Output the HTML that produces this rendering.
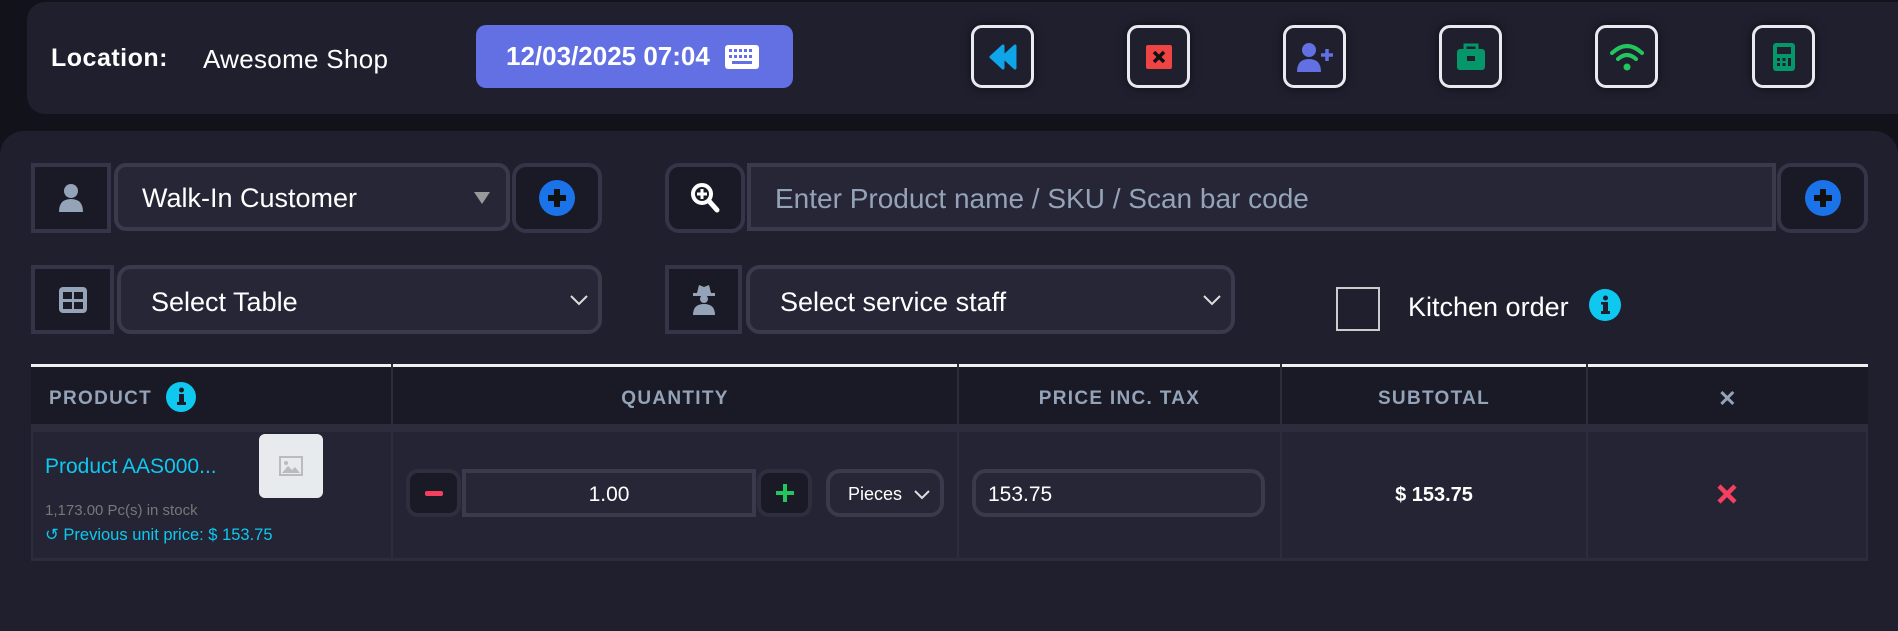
<!DOCTYPE html>
<html><head><meta charset="utf-8"><style>
*{box-sizing:border-box;margin:0;padding:0}
body{width:1898px;height:624px;background:#12121a;font-family:"Liberation Sans",sans-serif;position:relative;overflow:hidden;color:#fff}
.a{position:absolute}
.top{left:27px;top:2px;width:1900px;height:112px;background:#1f1f2e;border-radius:18px}
.main{left:0;top:131px;width:1898px;height:500px;background:#1f1f2e;border-radius:24px 24px 0 0}
.ib{position:absolute;top:25px;width:63px;height:63px;border:3px solid #e8eaf0;border-radius:11px;display:flex;align-items:center;justify-content:center;box-shadow:0 0 10px rgba(0,0,0,.5)}
.box{position:absolute;background:#1a1a26;border:4px solid #35354a;display:flex;align-items:center;justify-content:center}
.inp{position:absolute;background:#262636;border:4px solid #3a3a4c;display:flex;align-items:center;font-size:27px}
.th{position:absolute;top:370px;height:58px;display:flex;align-items:center;justify-content:center;color:#94a3b8;font-weight:bold;font-size:19px;letter-spacing:1.3px}
.vl{position:absolute;top:364px;width:2px;height:196px;background:#2c2c3c}
</style></head><body>
<div class="a top"></div>
<div class="a" style="left:51px;top:44px;font-size:25px;font-weight:bold;letter-spacing:0.5px">Location:</div>
<div class="a" style="left:203px;top:44px;font-size:26px;letter-spacing:0.3px">Awesome Shop</div>
<div class="a" style="left:476px;top:25px;width:317px;height:63px;background:#6370e4;border-radius:10px;display:flex;align-items:center;padding-left:30px;font-size:26px;font-weight:bold">12/03/2025 07:04
<svg width="36" height="26" viewBox="0 0 36 26" style="margin-left:14px"><rect x="1" y="1" width="34" height="24" rx="3" fill="#fff"/><g fill="#6370e4"><rect x="5" y="5" width="3" height="3"/><rect x="10" y="5" width="3" height="3"/><rect x="15" y="5" width="3" height="3"/><rect x="20" y="5" width="3" height="3"/><rect x="25" y="5" width="3" height="3"/><rect x="5" y="11" width="3" height="3"/><rect x="10" y="11" width="3" height="3"/><rect x="15" y="11" width="3" height="3"/><rect x="20" y="11" width="3" height="3"/><rect x="25" y="11" width="3" height="3"/><rect x="8" y="17" width="20" height="3"/></g></svg></div>

<div class="ib" style="left:971px"><svg width="28" height="26" viewBox="0 0 28 26"><path d="M14 2 L2 13 L14 24Z M26 2 L14 13 L26 24Z" fill="#0ea5e9" stroke="#0ea5e9" stroke-linejoin="round" stroke-width="3"/></svg></div>
<div class="ib" style="left:1127px"><svg width="28" height="26"><rect x="1" y="1" width="26" height="24" rx="2" fill="#ef4444"/><path d="M9 8L19 18M19 8L9 18" stroke="#111" stroke-width="3.5"/></svg></div>
<div class="ib" style="left:1283px"><svg width="36" height="32" viewBox="0 0 36 32"><circle cx="12" cy="9" r="7" fill="#6370e4"/><path d="M0 31 Q0 18 12 18 Q24 18 24 31Z" fill="#6370e4"/><path d="M30 8V20M24 14H36" stroke="#6370e4" stroke-width="3.5"/></svg></div>
<div class="ib" style="left:1439px"><svg width="30" height="28" viewBox="0 0 30 28"><path d="M9 6V2H21V6" fill="none" stroke="#059669" stroke-width="3"/><rect x="1" y="6" width="28" height="21" rx="3" fill="#059669"/><rect x="11" y="13" width="8" height="5" fill="#1f1f2e"/></svg></div>
<div class="ib" style="left:1595px"><svg width="36" height="30" viewBox="0 0 36 30"><path d="M3 11 Q18 -3 33 11" fill="none" stroke="#22c55e" stroke-width="4" stroke-linecap="round"/><path d="M9 17 Q18 9 27 17" fill="none" stroke="#22c55e" stroke-width="4" stroke-linecap="round"/><circle cx="18" cy="25" r="3.5" fill="#22c55e"/></svg></div>
<div class="ib" style="left:1752px"><svg width="24" height="30" viewBox="0 0 24 30"><rect x="1" y="1" width="22" height="28" rx="3" fill="#059669"/><rect x="5" y="5" width="14" height="7" fill="#1f1f2e"/><g fill="#1f1f2e"><rect x="5" y="16" width="3" height="3"/><rect x="10.5" y="16" width="3" height="3"/><rect x="16" y="16" width="3" height="8"/><rect x="5" y="21" width="3" height="3"/><rect x="10.5" y="21" width="3" height="3"/></g></svg></div>

<div class="a main"></div>
<div class="box" style="left:31px;top:163px;width:80px;height:70px"><svg width="26" height="30" viewBox="0 0 26 30"><circle cx="13" cy="8" r="7" fill="#94a3b8"/><path d="M1 29 Q1 16 13 16 Q25 16 25 29Z" fill="#94a3b8"/></svg></div>
<div class="inp" style="left:114px;top:163px;width:396px;height:68px;border-radius:12px;padding:3px 0 0 24px;color:#fff">Walk-In Customer<svg class="a" style="right:16px;top:25px" width="16" height="12"><path d="M0 0H16L8 12Z" fill="#999"/></svg></div>
<div class="box" style="left:512px;top:163px;width:90px;height:70px;border-radius:14px"><svg width="36" height="36"><circle cx="18" cy="18" r="18" fill="#1a73e8"/><path d="M18 9V27M9 18H27" stroke="#111" stroke-width="6"/></svg></div>
<div class="box" style="left:665px;top:163px;width:80px;height:70px;border-radius:14px"><svg width="30" height="32" viewBox="0 0 30 32"><circle cx="12" cy="12" r="9" fill="none" stroke="#fff" stroke-width="4"/><path d="M12 7V17M7 12H17" stroke="#fff" stroke-width="3"/><path d="M19 19L27 28" stroke="#fff" stroke-width="5" stroke-linecap="round"/></svg></div>
<div class="inp" style="left:747px;top:163px;width:1029px;height:68px;padding:3px 0 0 24px;color:#94a3b8;font-size:28px">Enter Product name / SKU / Scan bar code</div>
<div class="box" style="left:1777px;top:163px;width:91px;height:70px;border-radius:14px"><svg width="36" height="36"><circle cx="18" cy="18" r="18" fill="#1a73e8"/><path d="M18 9V27M9 18H27" stroke="#111" stroke-width="6"/></svg></div>
<div class="box" style="left:31px;top:265px;width:83px;height:69px"><svg width="28" height="26"><rect x="0" y="0" width="28" height="26" rx="4" fill="#94a3b8"/><rect x="4" y="5" width="9" height="7" fill="#1a1a26"/><rect x="15" y="5" width="9" height="7" fill="#1a1a26"/><rect x="4" y="15" width="9" height="7" fill="#1a1a26"/><rect x="15" y="15" width="9" height="7" fill="#1a1a26"/></svg></div>
<div class="inp" style="left:117px;top:265px;width:485px;height:69px;border-radius:14px;padding:6px 0 0 30px">Select Table<svg class="a" style="right:10px;top:26px" width="18" height="11"><path d="M1 1L9 9L17 1" fill="none" stroke="#ddd" stroke-width="2"/></svg></div>
<div class="box" style="left:665px;top:265px;width:77px;height:69px"><svg width="26" height="32" viewBox="0 0 26 32"><path d="M6 9L8 1L13 3L18 1L20 9Z" fill="#94a3b8"/><rect x="2" y="9" width="22" height="3" fill="#94a3b8"/><circle cx="13" cy="15" r="4" fill="#94a3b8"/><path d="M2 31Q2 20 13 20Q24 20 24 31Z" fill="#94a3b8"/></svg></div>
<div class="inp" style="left:746px;top:265px;width:489px;height:69px;border-radius:14px;padding:6px 0 0 30px">Select service staff<svg class="a" style="right:10px;top:26px" width="18" height="11"><path d="M1 1L9 9L17 1" fill="none" stroke="#ddd" stroke-width="2"/></svg></div>
<div class="a" style="left:1336px;top:287px;width:44px;height:44px;border:2px solid #ccc"></div>
<div class="a" style="left:1408px;top:292px;font-size:27px">Kitchen order</div>
<svg class="a" style="left:1589px;top:289px" width="32" height="32"><circle cx="16" cy="16" r="16" fill="#0ec8f0"/><rect x="14" y="13" width="5" height="11" fill="#1f1f2e"/><rect x="12" y="22" width="9" height="3" fill="#1f1f2e"/><rect x="12" y="13" width="4" height="2.5" fill="#1f1f2e"/><circle cx="16.5" cy="9" r="2.5" fill="#1f1f2e"/></svg>
<div class="a" style="left:31px;top:364px;width:1837px;height:60px;background:#1a1a26;border-top:3px solid #f0f0f0"></div>
<div class="a" style="left:31px;top:424px;width:1837px;height:8px;background:#2c2c3c"></div>
<div class="a" style="left:31px;top:432px;width:1837px;height:128px;background:#242434;border-left:2px solid #2c2c3c;border-right:2px solid #2c2c3c"></div>
<div class="a" style="left:31px;top:558px;width:1837px;height:3px;background:#2c2c3c"></div>
<div class="vl" style="left:391px"></div><div class="vl" style="left:957px"></div><div class="vl" style="left:1280px"></div><div class="vl" style="left:1586px"></div>
<div class="th" style="left:49px;justify-content:flex-start">PRODUCT<svg style="margin-left:14px;margin-top:-4px" width="30" height="30"><circle cx="15" cy="15" r="15" fill="#0ec8f0"/><rect x="13" y="12" width="5" height="10" fill="#1a1a26"/><rect x="11" y="20" width="9" height="3" fill="#1a1a26"/><circle cx="15.5" cy="8" r="2.5" fill="#1a1a26"/></svg></div>
<div class="th" style="left:393px;width:564px">QUANTITY</div>
<div class="th" style="left:959px;width:321px">PRICE INC. TAX</div>
<div class="th" style="left:1282px;width:304px">SUBTOTAL</div>
<div class="th" style="left:1588px;width:280px;font-size:22px">✕</div>
<div class="a" style="left:45px;top:455px;font-size:21px;color:#0ec8f0">Product AAS000...</div>
<div class="a" style="left:259px;top:434px;width:64px;height:64px;background:#e8ebee;border-radius:6px;display:flex;align-items:center;justify-content:center"><svg width="24" height="20"><rect x="1" y="1" width="22" height="18" fill="none" stroke="#bbb" stroke-width="2"/><circle cx="7" cy="7" r="2" fill="#bbb"/><path d="M3 17L9 10L13 14L16 11L21 17Z" fill="#bbb"/></svg></div>
<div class="a" style="left:45px;top:502px;font-size:15px;color:#777">1,173.00 Pc(s) in stock</div>
<div class="a" style="left:45px;top:525px;font-size:16.5px;color:#0ec8f0">↺ Previous unit price: $ 153.75</div>
<div class="box" style="left:406px;top:469px;width:55px;height:48px;border-radius:12px;border-color:#2e2e3e"><div style="width:18px;height:5px;background:#f43f5e;border-radius:2px"></div></div>
<div class="inp" style="left:462px;top:469px;width:294px;height:48px;justify-content:center;font-size:21px;padding-top:3px">1.00</div>
<div class="box" style="left:757px;top:469px;width:55px;height:48px;border-radius:12px;border-color:#2e2e3e"><svg width="18" height="18"><path d="M9 0V18M0 9H18" stroke="#22c55e" stroke-width="4"/></svg></div>
<div class="inp" style="left:826px;top:469px;width:118px;height:48px;border-radius:14px;padding:2px 0 0 18px;font-size:18px">Pieces<svg class="a" style="right:10px;top:17px" width="16" height="10"><path d="M1 1L8 8L15 1" fill="none" stroke="#ddd" stroke-width="2"/></svg></div>
<div class="inp" style="left:972px;top:469px;width:293px;height:48px;border-radius:14px;padding:3px 0 0 12px;font-size:21px">153.75</div>
<div class="a" style="left:1282px;top:484px;width:304px;text-align:center;font-size:20px;font-weight:bold">$ 153.75</div>
<svg class="a" style="left:1717px;top:484px" width="20" height="20"><path d="M2 2L18 18M18 2L2 18" stroke="#f43f5e" stroke-width="4.5"/></svg>
</body></html>
